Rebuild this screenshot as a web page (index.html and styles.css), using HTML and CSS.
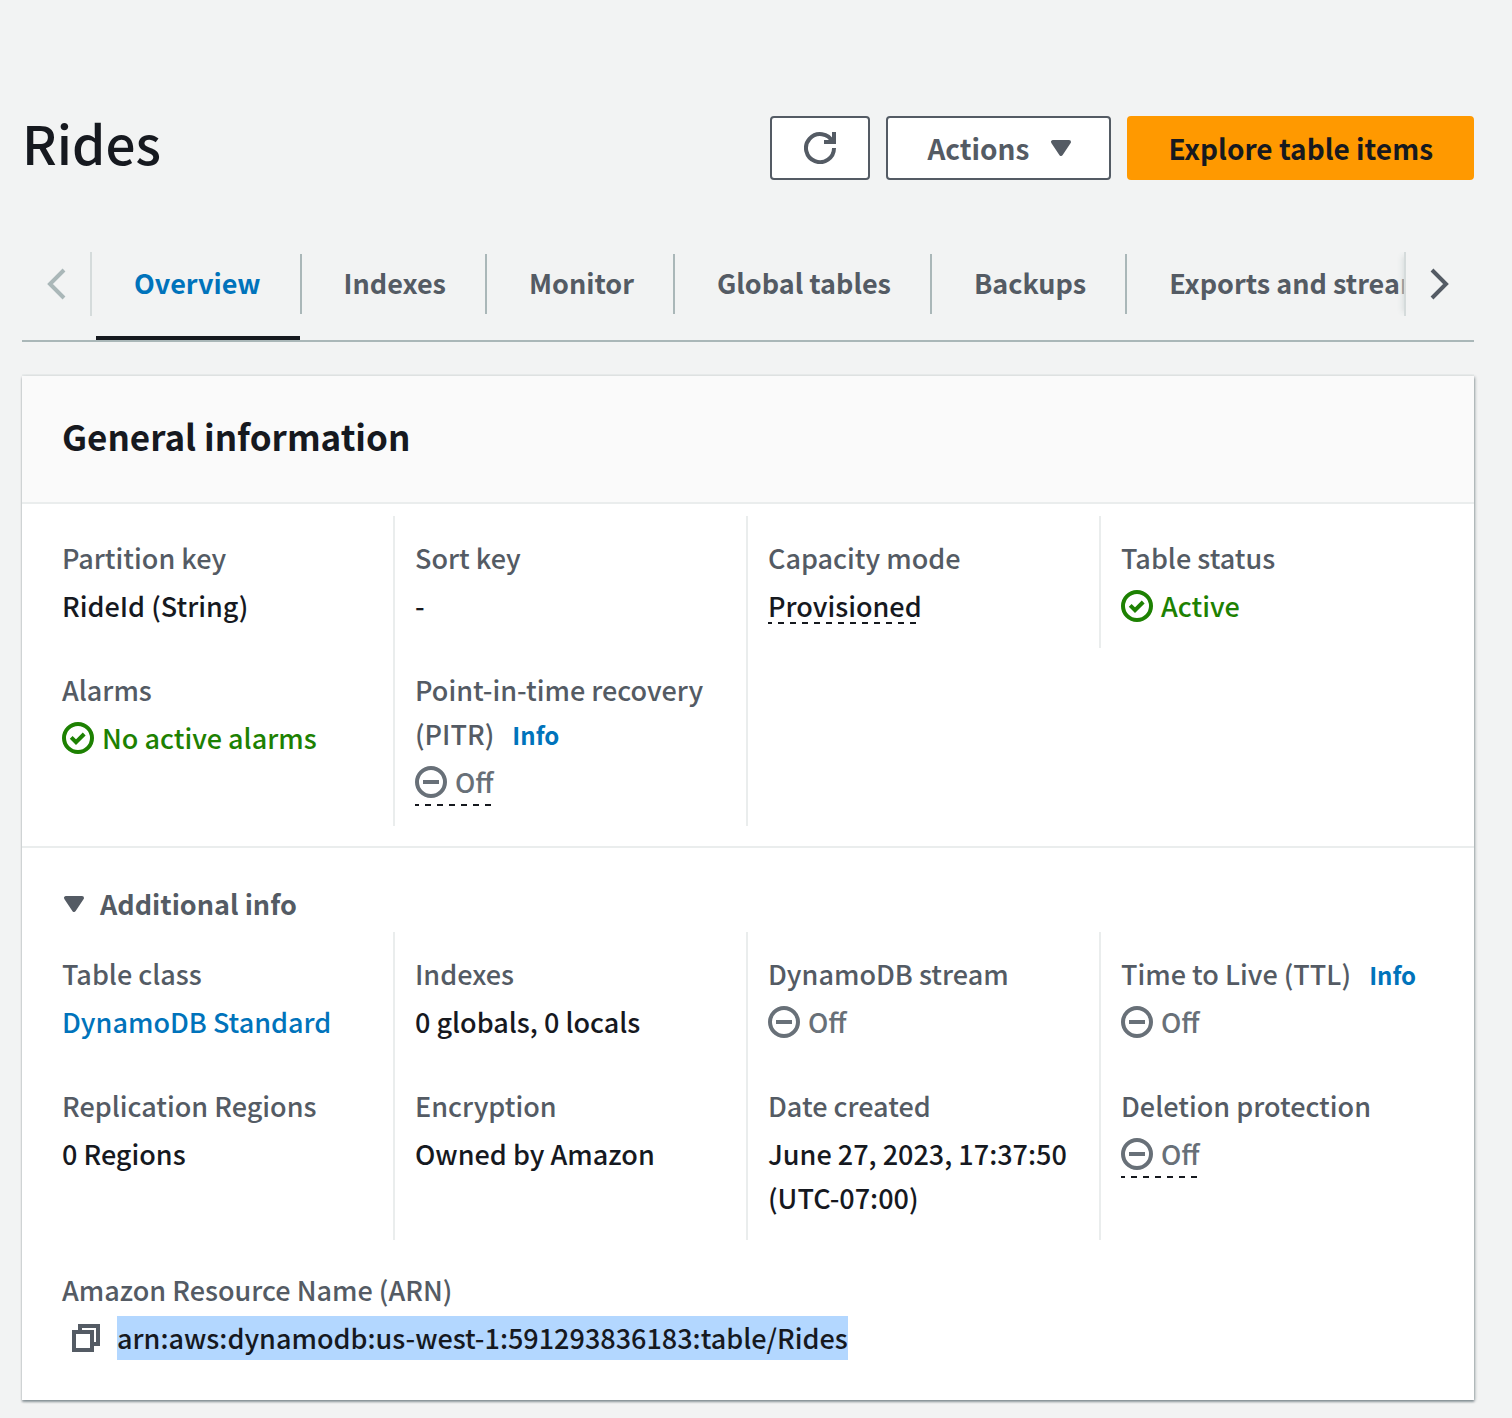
FILE: index.html
```html
<!DOCTYPE html>
<html lang="en">
<head>
<meta charset="utf-8">
<meta name="viewport" content="width=device-width, initial-scale=1">
<title>Rides</title>
<link rel="stylesheet" href="styles.css">
</head>
<body>
<svg class="sprite" aria-hidden="true">
  <symbol id="i-check" viewBox="0 0 16 16"><circle cx="8" cy="8" r="7"/><path d="m4.6 7.7 2.4 2.4 4.1-4.1"/></symbol>
  <symbol id="i-off" viewBox="0 0 16 16"><circle cx="8" cy="8" r="7"/><path d="M4 8h8"/></symbol>
  <symbol id="i-caret" viewBox="0 0 16 16"><path class="solid" d="M4 5h8l-4 6z"/></symbol>
</svg>
<main class="page">
  <header class="page-header">
    <h1>Rides</h1>
    <div class="actions">
      <button class="btn btn-icon" type="button" aria-label="Refresh">
        <svg class="icon" viewBox="0 0 16 16"><path d="M10 5h5V0"/><path d="M15 8a7 7 0 1 1-.7-3"/></svg>
      </button>
      <button class="btn btn-menu" type="button">Actions <svg class="icon"><use href="#i-caret"/></svg></button>
      <button class="btn btn-primary" type="button">Explore table items</button>
    </div>
  </header>

  <nav class="tabs">
    <button class="scroll scroll-left" type="button" aria-label="Scroll left" disabled>
      <svg class="icon" viewBox="0 0 16 16"><path d="M12 1 5 8l7 7"/></svg>
    </button>
    <div class="tab-list">
      <a class="tab tab-active" href="#overview"><span>Overview</span></a>
      <a class="tab" href="#indexes"><span>Indexes</span></a>
      <a class="tab" href="#monitor"><span>Monitor</span></a>
      <a class="tab" href="#global"><span>Global tables</span></a>
      <a class="tab" href="#backups"><span>Backups</span></a>
      <a class="tab" href="#exports"><span>Exports and streams</span></a>
    </div>
    <button class="scroll scroll-right" type="button" aria-label="Scroll right">
      <svg class="icon" viewBox="0 0 16 16"><path d="m4 1 7 7-7 7"/></svg>
    </button>
  </nav>

  <section class="card" id="overview">
    <header class="card-header"><h2>General information</h2></header>
    <dl class="grid grid-general">
      <div class="cell"><dt>Partition key</dt><dd>RideId (String)</dd></div>
      <div class="cell"><dt>Sort key</dt><dd>-</dd></div>
      <div class="cell"><dt>Capacity mode</dt><dd><span class="hint">Provisioned</span></dd></div>
      <div class="cell"><dt>Table status</dt><dd><span class="status ok"><svg class="icon"><use href="#i-check"/></svg>Active</span></dd></div>
      <div class="cell"><dt>Alarms</dt><dd><span class="status ok"><svg class="icon"><use href="#i-check"/></svg>No active alarms</span></dd></div>
      <div class="cell"><dt>Point-in-time recovery (PITR) <a class="info" href="#pitr">Info</a></dt><dd><span class="status off dashed"><svg class="icon"><use href="#i-off"/></svg>Off</span></dd></div>
    </dl>
    <div class="additional">
      <button class="expander" type="button" aria-expanded="true"><svg class="icon"><use href="#i-caret"/></svg>Additional info</button>
      <dl class="grid">
        <div class="cell"><dt>Table class</dt><dd><a href="#class">DynamoDB Standard</a></dd></div>
        <div class="cell"><dt>Indexes</dt><dd>0 globals, 0 locals</dd></div>
        <div class="cell"><dt>DynamoDB stream</dt><dd><span class="status off"><svg class="icon"><use href="#i-off"/></svg>Off</span></dd></div>
        <div class="cell"><dt>Time to Live (TTL) <a class="info" href="#ttl">Info</a></dt><dd><span class="status off"><svg class="icon"><use href="#i-off"/></svg>Off</span></dd></div>
        <div class="cell"><dt>Replication Regions</dt><dd>0 Regions</dd></div>
        <div class="cell"><dt>Encryption</dt><dd>Owned by Amazon</dd></div>
        <div class="cell"><dt>Date created</dt><dd>June 27, 2023, 17:37:50 (UTC-07:00)</dd></div>
        <div class="cell"><dt>Deletion protection</dt><dd><span class="status off dashed"><svg class="icon"><use href="#i-off"/></svg>Off</span></dd></div>
      </dl>
      <dl class="arn">
        <dt>Amazon Resource Name (ARN)</dt>
        <dd>
          <button class="copy" type="button" aria-label="Copy ARN">
            <svg class="icon" viewBox="0 0 16 16"><path d="M2 5h9v9H2z"/><path d="M5 4V2h9v9h-2"/></svg>
          </button>
          <span class="selected">arn:aws:dynamodb:us-west-1:591293836183:table/Rides</span>
        </dd>
      </dl>
    </div>
  </section>
</main>
</body>
</html>
```
FILE: styles.css
```css
* { box-sizing: border-box; }

body {
  margin: 0;
  background: #f2f3f3;
  color: #16191f;
  font-family: "Noto Sans CJK SC", "Noto Sans", sans-serif;
  font-size: 27px;
  font-weight: 500;
  line-height: 44px;
}

h1, h2, dl, dd { margin: 0; }

a { color: #0073bb; text-decoration: none; }

button { font: inherit; color: inherit; cursor: pointer; }

.sprite { position: absolute; width: 0; height: 0; }

.icon {
  flex: none;
  width: 32px;
  height: 32px;
  fill: none;
  stroke: currentColor;
  stroke-width: 2;
}

.solid { fill: currentColor; stroke-linejoin: round; }

.page { padding: 116px 38px 16px 22px; }

.page-header {
  display: flex;
  align-items: flex-start;
  justify-content: space-between;
}

h1 { font-size: 53px; font-weight: 500; line-height: 52px; }

.actions { display: flex; gap: 16px; }

.btn {
  display: flex;
  align-items: center;
  justify-content: center;
  gap: 16px;
  height: 64px;
  padding: 0 39px;
  border: 2px solid #545b64;
  border-radius: 4px;
  background: #fff;
  color: #545b64;
  font-size: 28px;
  font-weight: 700;
  line-height: 40px;
  white-space: nowrap;
}

.btn-icon { width: 100px; padding: 0; }

.btn-menu { padding-right: 32px; }

.btn-primary { border-color: #ff9900; background: #ff9900; color: #16191f; }

.tabs {
  display: flex;
  align-items: flex-start;
  margin: 72px 0 34px;
  border-bottom: 2px solid #aab7b8;
}

.scroll {
  flex: none;
  display: flex;
  align-items: center;
  justify-content: center;
  width: 70px;
  height: 64px;
  padding: 0;
  border: 0 solid #d5dbdb;
  background: none;
  color: #545b64;
}

.scroll-left { border-right-width: 2px; color: #aab7b8; }

.scroll-right {
  border-left-width: 2px;
  box-shadow: -5px 0 6px -4px #d5dbdb;
  clip-path: inset(0 0 0 -10px);
}

.tab-list {
  flex: 1;
  display: flex;
  min-width: 0;
  padding: 2px 0 0 4px;
  overflow: hidden;
}

.tab {
  flex: none;
  height: 86px;
  color: #545b64;
  font-weight: 700;
  white-space: nowrap;
}

.tab span {
  display: block;
  padding: 7px 39px 9px 42px;
  border-right: 2px solid #aab7b8;
}

.tab:first-child span { padding-left: 38px; }

.tab-active {
  color: #0073bb;
  background: linear-gradient(#16191f, #16191f) left bottom / calc(100% - 2px) 4px no-repeat;
}

.card {
  background: #fff;
  box-shadow: 0 2px 2px rgba(0, 28, 36, .3), 1px 1px 3px rgba(0, 28, 36, .3), 0 -2px 0 #eaeded;
}

.card-header {
  padding: 38px 40px 44px;
  border-bottom: 2px solid #eaeded;
  background: #fafafa;
}

h2 { font-size: 35px; font-weight: 700; line-height: 44px; }

.grid { display: grid; grid-template-columns: repeat(4, 1fr); padding: 0 20px; }

.grid-general { padding: 12px 20px 20px; }

.cell { padding: 20px; border-right: 2px solid #eaeded; }

.cell:nth-child(4n) { border-right-color: transparent; }

dt { margin-bottom: 4px; color: #545b64; }

.info { margin-left: 12px; font-size: 24px; font-weight: 700; line-height: 24px; }

dd { display: flex; align-items: center; }

.status { display: flex; align-items: center; gap: 8px; }

.ok { color: #1d8102; }

.off { color: #687078; }

/* Dashed underline with even 6px dashes and gaps */
.hint, .dashed {
  padding-bottom: 2px;
  background: repeating-linear-gradient(90deg, #16191f 0 4px, transparent 4px 10px, #16191f 10px 12px) left bottom / 100% 2px no-repeat;
}

.hint { margin-top: 6px; line-height: 32px; }

.additional { padding: 34px 0 40px; border-top: 2px solid #eaeded; }

.expander {
  display: flex;
  align-items: center;
  gap: 10px;
  margin: 0 36px 6px;
  padding: 0;
  border: 0;
  background: none;
  color: #545b64;
  font-weight: 700;
}

.arn { padding: 28px 40px 0; }

.arn dd { gap: 15px; }

.copy {
  display: flex;
  padding: 0 0 0 8px;
  border: 0;
  background: none;
  color: #545b64;
}

.selected { background: #b3d7ff; }
```
